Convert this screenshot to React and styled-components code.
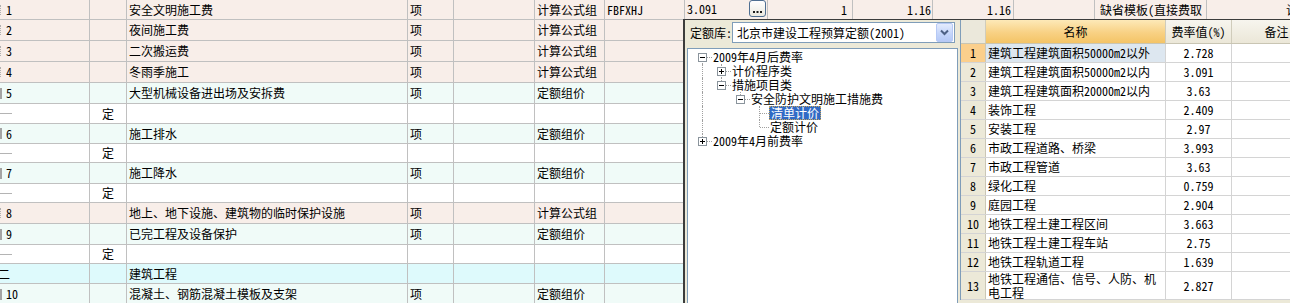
import React from 'react';
import styled, { createGlobalStyle, css } from 'styled-components';

const FONT = `"Noto Sans Mono CJK SC", "Noto Sans CJK SC", "Liberation Mono", monospace`;

const GlobalStyle = createGlobalStyle`
  html, body { margin: 0; padding: 0; background: #fff; }
  body { font-family: ${FONT}; font-size: 12px; color: #000; }
  * { box-sizing: border-box; }
`;

const PINK = '#f8eee9';
const MINT = '#f0fbf8';
const WHITE = '#ffffff';
const CYAN = '#defafc';
const LINE = '#c0c0c0';

const COLS = [90, 37, 281, 46, 81, 70, 80, 83, 85, 80, 81, 81, 112, 200];

const Screen = styled.div`
  position: relative;
  width: 1290px;
  height: 303px;
  overflow: hidden;
  background: #fff;
`;

const Grid = styled.div`
  display: flex;
  flex-direction: column;
  width: 1400px;
`;

const GridRow = styled.div`
  display: flex;
  flex: 0 0 ${p => p.$h}px;
  height: ${p => p.$h}px;
  background: ${p => p.$bg};
  border-bottom: 1px solid ${LINE};
`;

const Cell = styled.div`
  flex: 0 0 ${p => p.$w}px;
  width: ${p => p.$w}px;
  border-right: 1px solid ${LINE};
  display: flex;
  align-items: center;
  justify-content: ${p => (p.$align === 'right' ? 'flex-end' : p.$align === 'center' ? 'center' : 'flex-start')};
  padding: 0 ${p => p.$pr ?? 2}px 0 ${p => p.$pl ?? 2}px;
  overflow: hidden;
  white-space: nowrap;
  line-height: 14px;
`;

const Marker = styled.span`
  flex: 0 0 auto;
  ${p =>
    p.$kind === 'dash'
      ? css`width: 12px; height: 0; border-top: 1px solid #b4b4b4;`
      : p.$kind === 'bar'
      ? css`width: 2px; height: 11px; background: #a4a4a4; margin-right: 4px;`
      : css`width: 1px; height: 10px; border-left: 1px dotted #b0b0b0; margin-right: 5px;`}
`;

const TopNo = styled.span`
  margin-left: -2px;
`;

const EditText = styled.span`
  align-self: flex-start;
  margin-top: 2px;
`;

const EllipsisBtn = styled.span`
  margin-left: auto;
  align-self: flex-start;
  width: 17px;
  height: 17px;
  border: 1px solid #4f6f92;
  border-radius: 3px;
  background: linear-gradient(#ffffff, #ebe9e0);
  display: flex;
  align-items: flex-end;
  justify-content: center;
  padding-bottom: 3px;
`;

const Popup = styled.div`
  position: absolute;
  left: 683px;
  top: 19px;
  width: 620px;
  height: 300px;
  background: #ece9d8;
  border-top: 1px solid #3c3c3c;
  border-left: 2px solid #3c3c3c;
  display: flex;
`;

const LeftPane = styled.div`
  flex: 0 0 273px;
  display: flex;
  flex-direction: column;
`;

const ComboRow = styled.div`
  display: flex;
  align-items: center;
  padding: 2px 0 5px 5px;
`;

const ComboLabel = styled.span`
  white-space: nowrap;
  line-height: 14px;
`;

const Combo = styled.div`
  width: 223px;
  height: 21px;
  border: 1px solid #7f9db9;
  background: #fff;
  display: flex;
  align-items: center;
  padding: 1px;
`;

const ComboText = styled.span`
  flex: 1;
  padding-left: 3px;
  white-space: nowrap;
  overflow: hidden;
  line-height: 14px;
`;

const ComboBtn = styled.span`
  flex: 0 0 17px;
  height: 19px;
  border: 1px solid #b6c9f5;
  border-radius: 2px;
  background: linear-gradient(#e4ecfd, #c3d4fa 60%, #b5c9f6);
  display: flex;
  align-items: center;
  justify-content: center;
`;

const TreeBox = styled.div`
  flex: 1;
  margin-left: 2px;
  background: #fff;
  border: 1px solid #7f9db9;
  padding: 1px 0 0 5px;
`;

const TreeRow = styled.div`
  display: flex;
  height: 14px;
  line-height: 14px;
`;

const Guide = styled.span`
  position: relative;
  flex: 0 0 19px;
  height: 14px;
  ${p =>
    (p.$up || p.$down) &&
    css`
      &::before {
        content: '';
        position: absolute;
        left: 9px;
        top: ${p.$up ? 0 : 7}px;
        bottom: ${p.$down ? 0 : 7}px;
        border-left: 1px dotted #a0a0a0;
      }
    `}
  ${p =>
    p.$h &&
    css`
      &::after {
        content: '';
        position: absolute;
        left: 10px;
        right: 0;
        top: 7px;
        border-top: 1px dotted #a0a0a0;
      }
    `}
`;

const Expander = styled.span`
  position: absolute;
  z-index: 1;
  left: 5px;
  top: 3px;
  width: 9px;
  height: 9px;
  border: 1px solid #8a949c;
  background: #fff;
  &::before {
    content: '';
    position: absolute;
    left: 1px;
    top: 3px;
    width: 5px;
    height: 1px;
    background: #000;
  }
  ${p =>
    p.$plus &&
    css`
      &::after {
        content: '';
        position: absolute;
        left: 3px;
        top: 1px;
        width: 1px;
        height: 5px;
        background: #000;
      }
    `}
`;

const TreeLabel = styled.span`
  white-space: nowrap;
  padding: 0 1px;
  height: 14px;
  line-height: 14px;
  ${p =>
    p.$selected &&
    css`
      background: #316ac5;
      color: #fff;
      outline: 1px dotted #c9a55a;
      outline-offset: -1px;
      padding: 0 2px;
    `}
`;

const Splitter = styled.div`
  flex: 0 0 2px;
`;

const RightPane = styled.div`
  flex: 1;
  display: flex;
  flex-direction: column;
`;

const Table = styled.div`
  border-left: 1px solid #7f9db9;
  background: #fff;
`;

const THead = styled.div`
  display: flex;
  height: 24px;
  border-bottom: 1px solid #c9c5b3;
`;

const TH = styled.div`
  flex: 0 0 ${p => p.$w}px;
  display: flex;
  align-items: center;
  justify-content: center;
  border-right: 1px solid #d0ccbb;
  white-space: nowrap;
  line-height: 14px;
  background: ${p =>
    p.$hot
      ? 'linear-gradient(#fde9b8, #f8d184 55%, #f4c466)'
      : p.$corner
      ? '#ebe8db'
      : 'linear-gradient(#f7f5ee, #ebe7d8)'};
`;

const TR = styled.div`
  display: flex;
  height: ${p => p.$h}px;
  border-bottom: 1px solid #d4d4d4;
`;

const TD = styled.div`
  flex: 0 0 ${p => p.$w}px;
  display: flex;
  align-items: center;
  justify-content: ${p => (p.$center ? 'center' : 'flex-start')};
  padding: 0 ${p => (p.$center ? 0 : 2)}px;
  border-right: 1px solid #d4d4d4;
  line-height: 14px;
  white-space: ${p => (p.$wrap ? 'normal' : 'nowrap')};
  overflow: hidden;
  background: ${p => p.$bg || 'transparent'};
`;

const NumTD = styled(TD)`
  background: ${p => (p.$active ? '#fbcf8c' : '#ece9d8')};
  border-right-color: #cbc7b6;
  justify-content: center;
  padding: 0;
`;

const rows = [
  { h: 20, bg: PINK, mark: 'dot', no: '1', name: '安全文明施工费', unit: '项', kind: '计算公式组', code: 'FBFXHJ', top: true },
  { h: 21, bg: PINK, mark: 'dot', no: '2', name: '夜间施工费', unit: '项', kind: '计算公式组' },
  { h: 21, bg: PINK, mark: 'dot', no: '3', name: '二次搬运费', unit: '项', kind: '计算公式组' },
  { h: 21, bg: PINK, mark: 'dot', no: '4', name: '冬雨季施工', unit: '项', kind: '计算公式组' },
  { h: 21, bg: MINT, mark: 'bar', no: '5', name: '大型机械设备进出场及安拆费', unit: '项', kind: '定额组价' },
  { h: 20, bg: WHITE, mark: 'dash', type: '定' },
  { h: 20, bg: MINT, mark: 'bar', no: '6', name: '施工排水', unit: '项', kind: '定额组价' },
  { h: 19, bg: WHITE, mark: 'dash', type: '定' },
  { h: 21, bg: MINT, mark: 'bar', no: '7', name: '施工降水', unit: '项', kind: '定额组价' },
  { h: 19, bg: WHITE, mark: 'dash', type: '定' },
  { h: 21, bg: PINK, mark: 'dot', no: '8', name: '地上、地下设施、建筑物的临时保护设施', unit: '项', kind: '计算公式组' },
  { h: 21, bg: MINT, mark: 'bar', no: '9', name: '已完工程及设备保护', unit: '项', kind: '定额组价' },
  { h: 19, bg: WHITE, mark: 'dash', type: '定' },
  { h: 20, bg: CYAN, chapter: '二', name: '建筑工程' },
  { h: 21, bg: MINT, mark: 'bar', no: '10', name: '混凝土、钢筋混凝土模板及支架', unit: '项', kind: '定额组价' },
];

const tree = [
  { label: '2009年4月后费率', guides: [], conn: { up: false, down: true }, exp: 'minus' },
  { label: '计价程序类', guides: [true], conn: { up: true, down: true }, exp: 'plus' },
  { label: '措施项目类', guides: [true], conn: { up: true, down: false }, exp: 'minus' },
  { label: '安全防护文明施工措施费', guides: [true, false], conn: { up: true, down: false }, exp: 'minus' },
  { label: '清单计价', guides: [true, false, false], conn: { up: true, down: true }, selected: true },
  { label: '定额计价', guides: [true, false, false], conn: { up: true, down: false } },
  { label: '2009年4月前费率', guides: [], conn: { up: true, down: false }, exp: 'plus' },
];

const rates = [
  ['建筑工程建筑面积50000m2以外', '2.728'],
  ['建筑工程建筑面积50000m2以内', '3.091'],
  ['建筑工程建筑面积20000m2以内', '3.63'],
  ['装饰工程', '2.409'],
  ['安装工程', '2.97'],
  ['市政工程道路、桥梁', '3.993'],
  ['市政工程管道', '3.63'],
  ['绿化工程', '0.759'],
  ['庭园工程', '2.904'],
  ['地铁工程土建工程区间', '3.663'],
  ['地铁工程土建工程车站', '2.75'],
  ['地铁工程轨道工程', '1.639'],
  ['地铁工程通信、信号、人防、机电工程', '2.827'],
];

const Dots = () => (
  <svg width="9" height="2" viewBox="0 0 9 2">
    <rect x="0" y="0" width="2" height="2" fill="#1b1b1b" />
    <rect x="3.5" y="0" width="2" height="2" fill="#1b1b1b" />
    <rect x="7" y="0" width="2" height="2" fill="#1b1b1b" />
  </svg>
);

const Chevron = () => (
  <svg width="9" height="7" viewBox="0 0 9 7">
    <path d="M1 1.5 L4.5 5 L8 1.5" fill="none" stroke="#4d6185" strokeWidth="2" />
  </svg>
);

function MainRow({ r }) {
  return (
    <GridRow $h={r.h} $bg={r.bg}>
      <Cell $w={COLS[0]} $pl={0}>
        {r.chapter ? <TopNo>{r.chapter}</TopNo> : <Marker $kind={r.mark} />}
        {r.no}
      </Cell>
      <Cell $w={COLS[1]} $align="center" $pl={0} $pr={0}>{r.type}</Cell>
      <Cell $w={COLS[2]}>{r.name}</Cell>
      <Cell $w={COLS[3]}>{r.unit}</Cell>
      <Cell $w={COLS[4]} />
      <Cell $w={COLS[5]}>{r.kind}</Cell>
      <Cell $w={COLS[6]}>{r.code}</Cell>
      {r.top ? (
        <>
          <Cell $w={COLS[7]} $pr={1}>
            <EditText>3.091</EditText>
            <EllipsisBtn><Dots /></EllipsisBtn>
          </Cell>
          <Cell $w={COLS[8]} $align="right" $pr={5}>1</Cell>
          <Cell $w={COLS[9]} $align="right" $pr={1}>1.16</Cell>
          <Cell $w={COLS[10]} $align="right" $pr={2}>1.16</Cell>
          <Cell $w={COLS[11]} />
          <Cell $w={COLS[12]} $pl={5}>缺省模板(直接费取</Cell>
          <Cell $w={COLS[13]} $pl={79}>计算</Cell>
        </>
      ) : (
        COLS.slice(7).map((w, i) => <Cell key={i} $w={w} />)
      )}
    </GridRow>
  );
}

function TreeNode({ n }) {
  return (
    <TreeRow>
      {n.guides.map((g, i) => (
        <Guide key={i} $up={g} $down={g} />
      ))}
      <Guide $up={n.conn.up} $down={n.conn.down} $h>
        {n.exp && <Expander $plus={n.exp === 'plus'} />}
      </Guide>
      <TreeLabel $selected={n.selected}>{n.label}</TreeLabel>
    </TreeRow>
  );
}

export default function App() {
  return (
    <>
      <GlobalStyle />
      <Screen>
        <Grid>
          {rows.map((r, i) => (
            <MainRow key={i} r={r} />
          ))}
        </Grid>
        <Popup>
          <LeftPane>
            <ComboRow>
              <ComboLabel>定额库:</ComboLabel>
              <Combo>
                <ComboText>北京市建设工程预算定额(2001)</ComboText>
                <ComboBtn><Chevron /></ComboBtn>
              </Combo>
            </ComboRow>
            <TreeBox>
              {tree.map((n, i) => (
                <TreeNode key={i} n={n} />
              ))}
            </TreeBox>
          </LeftPane>
          <Splitter />
          <RightPane>
            <Table>
              <THead>
                <TH $w={25} $corner />
                <TH $w={180} $hot>名称</TH>
                <TH $w={66}>费率值(%)</TH>
                <TH $w={90}>备注</TH>
              </THead>
              {rates.map(([name, v], i) => (
                <TR key={i} $h={i === 12 ? 28 : 19}>
                  <NumTD $w={25} $active={i === 0}>{i + 1}</NumTD>
                  <TD $w={180} $wrap={i === 12} $bg={i === 0 ? '#dde7f0' : undefined}>{name}</TD>
                  <TD $w={66} $center>{v}</TD>
                  <TD $w={90} />
                </TR>
              ))}
            </Table>
          </RightPane>
        </Popup>
      </Screen>
    </>
  );
}
